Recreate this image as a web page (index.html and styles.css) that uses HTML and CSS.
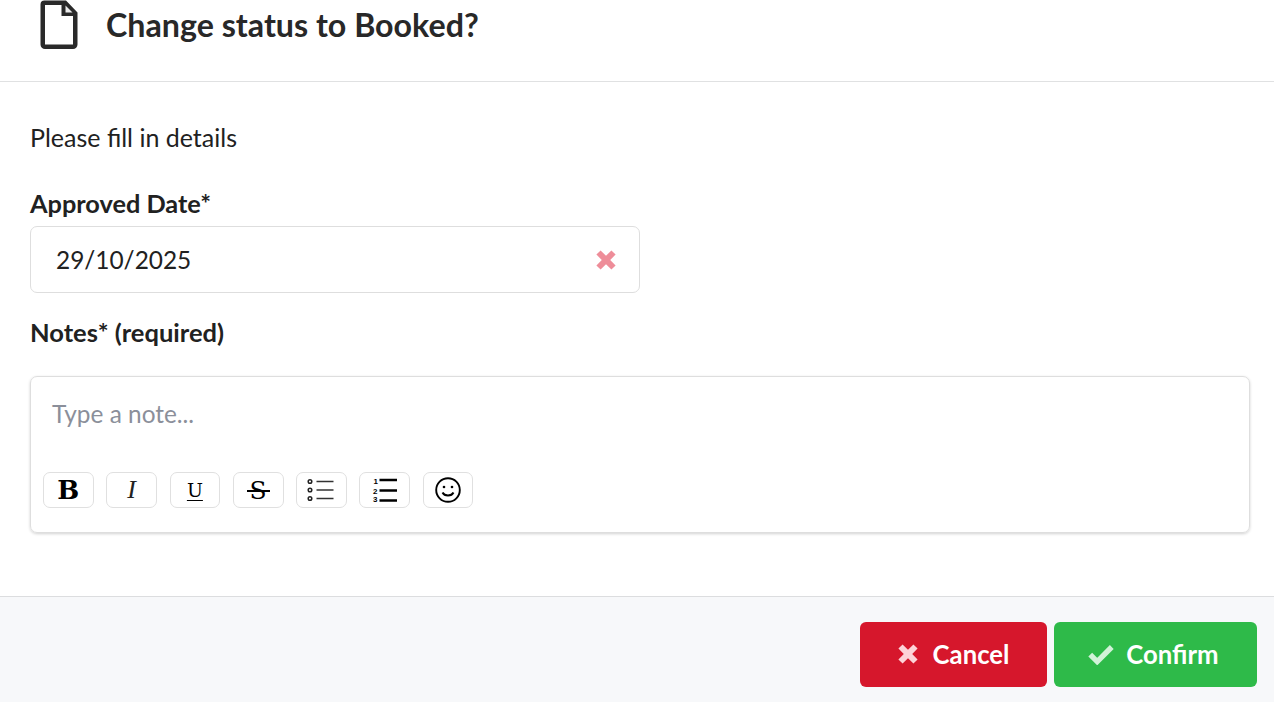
FILE: index.html
```html
<!DOCTYPE html>
<html lang="en">
<head>
<meta charset="utf-8">
<title>Change status</title>
<link rel="stylesheet" href="styles.css">
</head>
<body>
<div class="modal">
  <header class="head">
    <svg class="doc-icon" viewBox="0 0 38 50" aria-hidden="true">
      <path class="doc-outer" fill-rule="evenodd" d="M4.500 0.500H26L37.500 12.500V44.500A4.500 4.500 0 0 1 33 49H5A4.500 4.500 0 0 1 0.500 44.500V4.500A4 4 0 0 1 4.500 0.500ZM5 5V44.500H33V16H21.500V5Z"/>
      <path class="doc-tri" d="M25.500 5.500 32.500 12.500H25.500Z"/>
    </svg>
    <h1 class="title">Change status to Booked?</h1>
  </header>
  <main class="body">
    <p class="intro">Please fill in details</p>
    <label class="field-label">Approved Date*</label>
    <div class="date-input">
      <span>29/10/2025</span>
      <svg class="x-icon x-clear" viewBox="0 0 20 20" aria-hidden="true"><path d="M2 5.500 5.500 2 10 6.500 14.500 2 18 5.500 13.500 10 18 14.500 14.500 18 10 13.500 5.500 18 2 14.500 6.500 10Z"/></svg>
    </div>
    <label class="field-label notes-label">Notes* (required)</label>
    <div class="editor">
      <div class="placeholder">Type a note...</div>
      <div class="toolbar">
        <button class="tool tool-b">B</button>
        <button class="tool tool-i">I</button>
        <button class="tool tool-u">U</button>
        <button class="tool tool-s">S</button>
        <button class="tool">
          <svg class="tool-svg" viewBox="0 0 26 24" aria-hidden="true">
            <circle cx="2" cy="3.500" r="1.800" class="ol"/><circle cx="2" cy="12" r="1.800" class="ol"/><circle cx="2" cy="20.500" r="1.800" class="ol"/>
            <path class="ln" d="M8.500 3.500H25.500M8.500 12H25.500M8.500 20.500H25.500"/>
          </svg>
        </button>
        <button class="tool">
          <svg class="tool-svg" viewBox="0 0 26 24" aria-hidden="true">
            <path class="ln-b" d="M7.500 2H25M7.500 12.500H25M7.500 22.500H25"/>
            <text x="1.500" y="6" class="num">1</text><text x="1" y="15.500" class="num">2</text><text x="1" y="24" class="num">3</text>
          </svg>
        </button>
        <button class="tool">
          <svg class="smile" viewBox="0 0 26 26" aria-hidden="true">
            <circle cx="13" cy="13" r="11.800" class="ol-b"/>
            <circle cx="9" cy="10" r="1.300"/><circle cx="17" cy="10" r="1.300"/>
            <path class="ol-b" d="M7.500 15.500C9.500 19.500 16.500 19.500 18.500 15.500"/>
          </svg>
        </button>
      </div>
    </div>
  </main>
  <footer class="foot">
    <button class="btn btn-red">
      <svg class="x-icon x-btn" viewBox="0 0 20 20" aria-hidden="true"><path d="M2 5.500 5.500 2 10 6.500 14.500 2 18 5.500 13.500 10 18 14.500 14.500 18 10 13.500 5.500 18 2 14.500 6.500 10Z"/></svg>
      Cancel
    </button>
    <button class="btn btn-green">
      <svg class="check" viewBox="0 0 26 20" aria-hidden="true"><path d="M3 10.500 9.500 17 23 3.500"/></svg>
      Confirm
    </button>
  </footer>
</div>
</body>
</html>
```

FILE: styles.css
```css
* { box-sizing: border-box; }
html, body { margin: 0; padding: 0; background: #fff; }
body { font-family: Lato, "Liberation Sans", sans-serif; color: #212121; overflow: hidden; }
.modal { width: 1274px; height: 702px; display: flex; flex-direction: column; }
.head { height: 82px; flex: none; border-bottom: 1px solid #e0e1e2; display: flex; align-items: flex-start; padding-left: 40px; }
.doc-icon { width: 38px; height: 50px; flex: none; }
.doc-outer { fill: #2a2a2a; }
.doc-tri { fill: #ececec; }
.title { margin: 3px 0 0 28px; font-size: 32.200px; line-height: 44px; font-weight: 700; color: #282828; }
.body { flex: 1; padding: 0 24px 0 30px; }
.intro { margin: 39px 0 0; font-size: 25px; line-height: 32px; }
.field-label { display: block; margin-top: 34px; font-size: 25.300px; line-height: 32px; font-weight: 700; }
.date-input { width: 610px; height: 67px; margin-top: 7px; border: 1px solid #dedede; border-radius: 7px; display: flex; align-items: center; justify-content: space-between; padding: 0 21px 0 25px; font-size: 24.400px; }
.x-icon path { fill: currentColor; }
.x-clear { width: 24px; height: 24px; color: #ee8d99; }
.notes-label { margin-top: 23px; font-size: 25.500px; }
.editor { margin-top: 28px; height: 157px; border: 1px solid #dedede; border-radius: 7px; box-shadow: 0 1px 3px rgba(0,0,0,.18); padding: 19px 12px 0; }
.placeholder { margin-left: 9px; font-size: 24.400px; line-height: 36px; color: #8b8f9a; }
.toolbar { display: flex; gap: 12.600px; margin-top: 40px; }
.tool { position: relative; width: 50.700px; height: 36px; padding: 0; background: #fff; border: 1px solid #e0e0e0; border-radius: 7px; display: flex; align-items: center; justify-content: center; color: #000; font-family: "DejaVu Serif", serif; }
.tool-b { font-size: 26px; font-weight: 700; }
.tool-i { font-family: "Liberation Serif", serif; font-size: 26px; font-style: italic; color: #222; }
.tool-u { font-size: 19px; text-decoration: underline; text-decoration-thickness: 1px; text-underline-offset: 3px; }
.tool-s { font-size: 25px; }
.tool-s::after { content: ""; position: absolute; left: 13px; right: 13px; top: 17px; height: 2px; background: #000; }
.tool-svg { width: 26px; height: 24px; overflow: visible; }
.smile { width: 26px; height: 26px; }
.ol { fill: none; stroke: #222; stroke-width: 1.500; }
.ol-b { fill: none; stroke: #000; stroke-width: 1.900; }
.ln { stroke: #333; stroke-width: 1.500; }
.ln-b { stroke: #000; stroke-width: 2.300; }
.num { font-family: "Liberation Sans", sans-serif; font-size: 8px; font-weight: 700; }
.foot { height: 106px; flex: none; border-top: 1px solid #dcdddf; background: #f7f8fa; display: flex; justify-content: flex-end; align-items: flex-start; gap: 7px; padding: 25px 17px 0 0; }
.btn { height: 65px; border: 0; border-radius: 6px; color: #fff; font-family: inherit; font-size: 25.700px; font-weight: 700; display: flex; align-items: center; justify-content: center; padding: 0 2px 2px 0; }
.btn-red { width: 187px; background: #d6172c; }
.btn-green { width: 203px; background: #2eba49; padding-right: 5px; }
.x-btn { width: 24px; height: 24px; color: #fdd3d8; margin-right: 13px; }
.check { width: 28px; height: 22px; margin-right: 11px; }
.check path { fill: none; stroke: #d2f2d8; stroke-width: 5; }
```
